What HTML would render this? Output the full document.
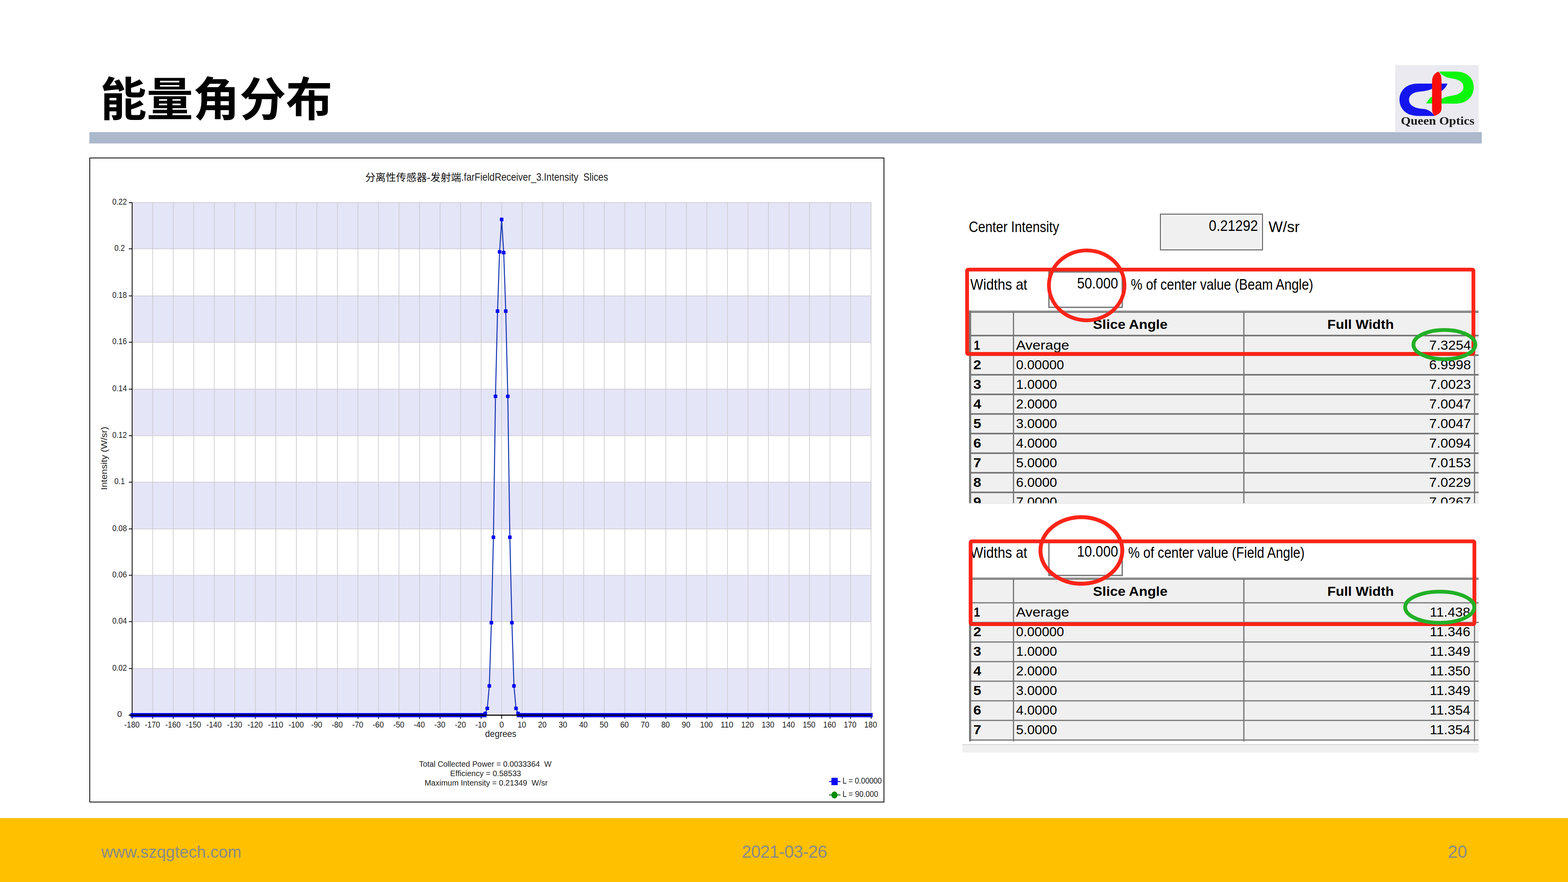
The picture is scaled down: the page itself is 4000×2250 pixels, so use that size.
<!DOCTYPE html>
<html lang="zh">
<head>
<meta charset="utf-8">
<title>能量角分布</title>
<style>
html,body{margin:0;padding:0;background:#fff}
body{width:4000px;height:2250px;overflow:hidden;font-family:"Liberation Sans", sans-serif}
#slide{position:relative;width:4000px;height:2250px;background:#fff;overflow:hidden}
.abs{position:absolute;display:block}
#rule{left:228px;top:337.4px;width:3552px;height:28.4px;background:#acb8cc}
#chartbox{left:228px;top:402px;width:2024px;height:1641px;border:2px solid #000;background:#fff}
#footer{left:0;top:2087px;width:4000px;height:163px;background:#ffc000}
.ft{position:absolute;line-height:48px;color:#898989;white-space:nowrap}
text{white-space:pre}
</style>
</head>
<body>
<div id="slide">
<h1 style="margin:0"><svg class="abs" style="left:0;top:150px" width="1200" height="200" viewBox="0 150 1200 200"><text x="255.6" y="296.2" font-size="118.5" font-weight="bold" fill="#000" textLength="592.5" lengthAdjust="spacingAndGlyphs" font-family='"Liberation Sans", "Noto Sans CJK SC", sans-serif'>能量角分布</text></svg></h1>
<div id="rule" class="abs"></div>
<div class="abs" style="left:3559px;top:166px;width:213px;height:170px;background:#eaeaf0">
<svg width="213" height="170" viewBox="0 0 213 170" style="filter:blur(0.6px)">
<g transform="translate(-19 -16) scale(0.13805)"><path d="M1105 458L560 458C340 458 218 590 218 755C218 920 340 1055 560 1055L865 1055C830 1000 770 935 650 925C500 915 395 860 395 760C395 665 470 620 600 605C720 592 780 575 830 548L1000 592C1045 560 1085 515 1105 458Z" fill="#1414ee"/><path d="M710 826L1250 830C1460 830 1590 700 1590 525C1590 350 1460 235 1250 235L950 235C1000 300 1060 345 1200 365C1330 385 1400 440 1400 520C1400 600 1330 660 1200 680C1080 698 1030 720 990 745L820 702C770 720 745 770 710 826Z" fill="#0cf60c"/><path d="M935 238C860 270 820 330 820 420L820 930C820 990 840 1035 872 1052C940 1030 995 990 995 920L995 420C995 330 985 280 935 238Z" fill="#fa0c0c"/></g>
<text x="14.46" y="151.6" font-size="29" textLength="187.88" lengthAdjust="spacingAndGlyphs" font-weight="bold" fill="#1c1c1c" font-family='"Liberation Serif", serif'>Queen Optics</text>
</svg></div>
<div id="chartbox" class="abs"></div>
<svg class="abs" width="4000" height="2250" viewBox="0 0 4000 2250" style="left:0;top:0">
<g font-family='"Liberation Sans", sans-serif' fill='#1e1e22'>
<rect x="337.2" y="516.8" width="1886" height="1306.8" fill="#fff"/>
<rect x="337.2" y="1705.4" width="1886" height="118.3" fill="#e5e5f8"/>
<rect x="337.2" y="1467.5" width="1886" height="118.3" fill="#e5e5f8"/>
<rect x="337.2" y="1230.1" width="1886" height="119.2" fill="#e5e5f8"/>
<rect x="337.2" y="992.7" width="1886" height="118.7" fill="#e5e5f8"/>
<rect x="337.2" y="754.8" width="1886" height="118.3" fill="#e5e5f8"/>
<rect x="337.2" y="516.9" width="1886" height="117.8" fill="#e5e5f8"/>
<path d="M389.56 516.8V1823.6M441.92 516.8V1823.6M494.28 516.8V1823.6M546.64 516.8V1823.6M599.01 516.8V1823.6M651.37 516.8V1823.6M703.73 516.8V1823.6M756.09 516.8V1823.6M808.45 516.8V1823.6M860.81 516.8V1823.6M913.17 516.8V1823.6M965.53 516.8V1823.6M1017.89 516.8V1823.6M1070.26 516.8V1823.6M1122.62 516.8V1823.6M1174.98 516.8V1823.6M1227.34 516.8V1823.6M1279.7 516.8V1823.6M1332.06 516.8V1823.6M1384.42 516.8V1823.6M1436.78 516.8V1823.6M1489.14 516.8V1823.6M1541.51 516.8V1823.6M1593.87 516.8V1823.6M1646.23 516.8V1823.6M1698.59 516.8V1823.6M1750.95 516.8V1823.6M1803.31 516.8V1823.6M1855.67 516.8V1823.6M1908.03 516.8V1823.6M1960.39 516.8V1823.6M2012.76 516.8V1823.6M2065.12 516.8V1823.6M2117.48 516.8V1823.6M2169.84 516.8V1823.6M2222.2 516.8V1823.6M337.2 1705.4H2223.2M337.2 1585.8H2223.2M337.2 1467.5H2223.2M337.2 1349.3H2223.2M337.2 1230.1H2223.2M337.2 1111.4H2223.2M337.2 992.7H2223.2M337.2 873.1H2223.2M337.2 754.8H2223.2M337.2 634.7H2223.2M337.2 516.9H2223.2" stroke="#cbcbcf" stroke-width="1.7" fill="none"/>
<path d="M328.7 1823.7H337.2M328.7 1705.4H337.2M328.7 1585.8H337.2M328.7 1467.5H337.2M328.7 1349.3H337.2M328.7 1230.1H337.2M328.7 1111.4H337.2M328.7 992.7H337.2M328.7 873.1H337.2M328.7 754.8H337.2M328.7 634.7H337.2M328.7 516.9H337.2M337.2 1823.6V1833.6M389.56 1823.6V1833.6M441.92 1823.6V1833.6M494.28 1823.6V1833.6M546.64 1823.6V1833.6M599.01 1823.6V1833.6M651.37 1823.6V1833.6M703.73 1823.6V1833.6M756.09 1823.6V1833.6M808.45 1823.6V1833.6M860.81 1823.6V1833.6M913.17 1823.6V1833.6M965.53 1823.6V1833.6M1017.89 1823.6V1833.6M1070.26 1823.6V1833.6M1122.62 1823.6V1833.6M1174.98 1823.6V1833.6M1227.34 1823.6V1833.6M1279.7 1823.6V1833.6M1332.06 1823.6V1833.6M1384.42 1823.6V1833.6M1436.78 1823.6V1833.6M1489.14 1823.6V1833.6M1541.51 1823.6V1833.6M1593.87 1823.6V1833.6M1646.23 1823.6V1833.6M1698.59 1823.6V1833.6M1750.95 1823.6V1833.6M1803.31 1823.6V1833.6M1855.67 1823.6V1833.6M1908.03 1823.6V1833.6M1960.39 1823.6V1833.6M2012.76 1823.6V1833.6M2065.12 1823.6V1833.6M2117.48 1823.6V1833.6M2169.84 1823.6V1833.6M2222.2 1823.6V1833.6M337.1 515.8V1824.6" stroke="#000" stroke-width="2" fill="none"/>
<rect x="332.7" y="1819" width="908.51" height="10.8" fill="#0202f0"/>
<rect x="1318.19" y="1819" width="908.01" height="10.8" fill="#0202f0"/>
<polyline fill="none" stroke="#1838b4" stroke-width="2.6" stroke-linejoin="round" points="1227.34,1824.2 1232.57,1823.8 1237.81,1820.2 1243.05,1807 1248.28,1749.8 1253.52,1588.5 1258.76,1370.5 1263.99,1011 1269.23,793.7 1274.46,642.5 1279.7,559.9 1284.94,644.4 1290.17,793.7 1295.41,1011 1300.64,1370.5 1305.88,1588.5 1311.12,1749.8 1316.35,1807 1321.59,1820.2 1326.82,1823.8 1332.06,1824.2"/>
<rect x="1233.21" y="1815.6" width="9.2" height="9.2" rx="1.6" fill="#0606f4"/>
<rect x="1238.45" y="1802.4" width="9.2" height="9.2" rx="1.6" fill="#0606f4"/>
<rect x="1243.68" y="1745.2" width="9.2" height="9.2" rx="1.6" fill="#0606f4"/>
<rect x="1248.92" y="1583.9" width="9.2" height="9.2" rx="1.6" fill="#0606f4"/>
<rect x="1254.16" y="1365.9" width="9.2" height="9.2" rx="1.6" fill="#0606f4"/>
<rect x="1259.39" y="1006.4" width="9.2" height="9.2" rx="1.6" fill="#0606f4"/>
<rect x="1264.63" y="789.1" width="9.2" height="9.2" rx="1.6" fill="#0606f4"/>
<rect x="1269.86" y="637.9" width="9.2" height="9.2" rx="1.6" fill="#0606f4"/>
<rect x="1275.1" y="555.3" width="9.2" height="9.2" rx="1.6" fill="#0606f4"/>
<rect x="1280.34" y="639.8" width="9.2" height="9.2" rx="1.6" fill="#0606f4"/>
<rect x="1285.57" y="789.1" width="9.2" height="9.2" rx="1.6" fill="#0606f4"/>
<rect x="1290.81" y="1006.4" width="9.2" height="9.2" rx="1.6" fill="#0606f4"/>
<rect x="1296.04" y="1365.9" width="9.2" height="9.2" rx="1.6" fill="#0606f4"/>
<rect x="1301.28" y="1583.9" width="9.2" height="9.2" rx="1.6" fill="#0606f4"/>
<rect x="1306.52" y="1745.2" width="9.2" height="9.2" rx="1.6" fill="#0606f4"/>
<rect x="1311.75" y="1802.4" width="9.2" height="9.2" rx="1.6" fill="#0606f4"/>
<rect x="1316.99" y="1815.6" width="9.2" height="9.2" rx="1.6" fill="#0606f4"/>
<path d="M328.7 1824.4H2223.2" stroke="#000" stroke-width="2.9"/>
<text x="305" y="1828.9" font-size="21.6" textLength="12.19" lengthAdjust="spacingAndGlyphs" text-anchor="middle">0</text>
<text x="305" y="1710.6" font-size="21.6" textLength="37.19" lengthAdjust="spacingAndGlyphs" text-anchor="middle">0.02</text>
<text x="305" y="1591" font-size="21.6" textLength="37.19" lengthAdjust="spacingAndGlyphs" text-anchor="middle">0.04</text>
<text x="305" y="1472.7" font-size="21.6" textLength="37.19" lengthAdjust="spacingAndGlyphs" text-anchor="middle">0.06</text>
<text x="305" y="1354.5" font-size="21.6" textLength="37.19" lengthAdjust="spacingAndGlyphs" text-anchor="middle">0.08</text>
<text x="305" y="1235.3" font-size="21.6" textLength="26.59" lengthAdjust="spacingAndGlyphs" text-anchor="middle">0.1</text>
<text x="305" y="1116.6" font-size="21.6" textLength="37.19" lengthAdjust="spacingAndGlyphs" text-anchor="middle">0.12</text>
<text x="305" y="997.9" font-size="21.6" textLength="37.19" lengthAdjust="spacingAndGlyphs" text-anchor="middle">0.14</text>
<text x="305" y="878.3" font-size="21.6" textLength="37.19" lengthAdjust="spacingAndGlyphs" text-anchor="middle">0.16</text>
<text x="305" y="760" font-size="21.6" textLength="37.19" lengthAdjust="spacingAndGlyphs" text-anchor="middle">0.18</text>
<text x="305" y="639.9" font-size="21.6" textLength="26.59" lengthAdjust="spacingAndGlyphs" text-anchor="middle">0.2</text>
<text x="305" y="522.1" font-size="21.6" textLength="37.19" lengthAdjust="spacingAndGlyphs" text-anchor="middle">0.22</text>
<text x="336.6" y="1856.2" font-size="21.4" textLength="38.97" lengthAdjust="spacingAndGlyphs" text-anchor="middle">-180</text>
<text x="388.96" y="1856.2" font-size="21.4" textLength="38.97" lengthAdjust="spacingAndGlyphs" text-anchor="middle">-170</text>
<text x="441.32" y="1856.2" font-size="21.4" textLength="38.97" lengthAdjust="spacingAndGlyphs" text-anchor="middle">-160</text>
<text x="493.68" y="1856.2" font-size="21.4" textLength="38.97" lengthAdjust="spacingAndGlyphs" text-anchor="middle">-150</text>
<text x="546.04" y="1856.2" font-size="21.4" textLength="38.97" lengthAdjust="spacingAndGlyphs" text-anchor="middle">-140</text>
<text x="598.41" y="1856.2" font-size="21.4" textLength="38.97" lengthAdjust="spacingAndGlyphs" text-anchor="middle">-130</text>
<text x="650.77" y="1856.2" font-size="21.4" textLength="38.97" lengthAdjust="spacingAndGlyphs" text-anchor="middle">-120</text>
<text x="703.13" y="1856.2" font-size="21.4" textLength="38.97" lengthAdjust="spacingAndGlyphs" text-anchor="middle">-110</text>
<text x="755.49" y="1856.2" font-size="21.4" textLength="38.97" lengthAdjust="spacingAndGlyphs" text-anchor="middle">-100</text>
<text x="807.85" y="1856.2" font-size="21.4" textLength="28.37" lengthAdjust="spacingAndGlyphs" text-anchor="middle">-90</text>
<text x="860.21" y="1856.2" font-size="21.4" textLength="28.37" lengthAdjust="spacingAndGlyphs" text-anchor="middle">-80</text>
<text x="912.57" y="1856.2" font-size="21.4" textLength="28.37" lengthAdjust="spacingAndGlyphs" text-anchor="middle">-70</text>
<text x="964.93" y="1856.2" font-size="21.4" textLength="28.37" lengthAdjust="spacingAndGlyphs" text-anchor="middle">-60</text>
<text x="1017.29" y="1856.2" font-size="21.4" textLength="28.37" lengthAdjust="spacingAndGlyphs" text-anchor="middle">-50</text>
<text x="1069.66" y="1856.2" font-size="21.4" textLength="28.37" lengthAdjust="spacingAndGlyphs" text-anchor="middle">-40</text>
<text x="1122.02" y="1856.2" font-size="21.4" textLength="28.37" lengthAdjust="spacingAndGlyphs" text-anchor="middle">-30</text>
<text x="1174.38" y="1856.2" font-size="21.4" textLength="28.37" lengthAdjust="spacingAndGlyphs" text-anchor="middle">-20</text>
<text x="1226.74" y="1856.2" font-size="21.4" textLength="28.37" lengthAdjust="spacingAndGlyphs" text-anchor="middle">-10</text>
<text x="1279.7" y="1856.2" font-size="21.4" textLength="11.47" lengthAdjust="spacingAndGlyphs" text-anchor="middle">0</text>
<text x="1331.26" y="1856.2" font-size="21.4" textLength="21.77" lengthAdjust="spacingAndGlyphs" text-anchor="middle">10</text>
<text x="1383.62" y="1856.2" font-size="21.4" textLength="21.77" lengthAdjust="spacingAndGlyphs" text-anchor="middle">20</text>
<text x="1435.98" y="1856.2" font-size="21.4" textLength="21.77" lengthAdjust="spacingAndGlyphs" text-anchor="middle">30</text>
<text x="1488.34" y="1856.2" font-size="21.4" textLength="21.77" lengthAdjust="spacingAndGlyphs" text-anchor="middle">40</text>
<text x="1540.71" y="1856.2" font-size="21.4" textLength="21.77" lengthAdjust="spacingAndGlyphs" text-anchor="middle">50</text>
<text x="1593.07" y="1856.2" font-size="21.4" textLength="21.77" lengthAdjust="spacingAndGlyphs" text-anchor="middle">60</text>
<text x="1645.43" y="1856.2" font-size="21.4" textLength="21.77" lengthAdjust="spacingAndGlyphs" text-anchor="middle">70</text>
<text x="1697.79" y="1856.2" font-size="21.4" textLength="21.77" lengthAdjust="spacingAndGlyphs" text-anchor="middle">80</text>
<text x="1750.15" y="1856.2" font-size="21.4" textLength="21.77" lengthAdjust="spacingAndGlyphs" text-anchor="middle">90</text>
<text x="1802.11" y="1856.2" font-size="21.4" textLength="32.37" lengthAdjust="spacingAndGlyphs" text-anchor="middle">100</text>
<text x="1854.47" y="1856.2" font-size="21.4" textLength="32.37" lengthAdjust="spacingAndGlyphs" text-anchor="middle">110</text>
<text x="1906.83" y="1856.2" font-size="21.4" textLength="32.37" lengthAdjust="spacingAndGlyphs" text-anchor="middle">120</text>
<text x="1959.19" y="1856.2" font-size="21.4" textLength="32.37" lengthAdjust="spacingAndGlyphs" text-anchor="middle">130</text>
<text x="2011.56" y="1856.2" font-size="21.4" textLength="32.37" lengthAdjust="spacingAndGlyphs" text-anchor="middle">140</text>
<text x="2063.92" y="1856.2" font-size="21.4" textLength="32.37" lengthAdjust="spacingAndGlyphs" text-anchor="middle">150</text>
<text x="2116.28" y="1856.2" font-size="21.4" textLength="32.37" lengthAdjust="spacingAndGlyphs" text-anchor="middle">160</text>
<text x="2168.64" y="1856.2" font-size="21.4" textLength="32.37" lengthAdjust="spacingAndGlyphs" text-anchor="middle">170</text>
<text x="2221" y="1856.2" font-size="21.4" textLength="32.37" lengthAdjust="spacingAndGlyphs" text-anchor="middle">180</text>
<text x="1277.5" y="1879.9" font-size="24" textLength="79.88" lengthAdjust="spacingAndGlyphs" text-anchor="middle">degrees</text>
<g transform="translate(272.6 1248.7) rotate(-90)"><text x="-1.32" y="0" font-size="22" textLength="161.64" lengthAdjust="spacingAndGlyphs">Intensity (W/sr)</text></g>
<text x="931.4" y="461.6" font-size="26" fill="#111" textLength="245.2" lengthAdjust="spacingAndGlyphs" font-family='"Liberation Sans", "Noto Sans CJK SC", sans-serif'>分离性传感器-发射端</text>
<text x="1176.82" y="461" font-size="28" textLength="374.36" lengthAdjust="spacingAndGlyphs" xml:space="preserve">.farFieldReceiver_3.Intensity  Slices</text>
<text x="1238" y="1955.6" font-size="20" textLength="337.9" lengthAdjust="spacingAndGlyphs" text-anchor="middle">Total Collected Power = 0.0033364  W</text>
<text x="1238.8" y="1979.6" font-size="20" textLength="180.9" lengthAdjust="spacingAndGlyphs" text-anchor="middle">Efficiency = 0.58533</text>
<text x="1240.2" y="2004.2" font-size="20" textLength="314" lengthAdjust="spacingAndGlyphs" text-anchor="middle">Maximum Intensity = 0.21349  W/sr</text>
<path d="M2115 1993.7H2144" stroke="#0a0acd" stroke-width="2.4"/>
<rect x="2121" y="1984.2" width="16" height="18.8" fill="#0808f6"/>
<path d="M2115 2027.9H2144" stroke="#0b6b0b" stroke-width="2.4"/>
<ellipse cx="2128.7" cy="2028" rx="7.9" ry="9" fill="#0a8c0a"/>
<text x="2149.24" y="1998.7" font-size="22.6" textLength="100.21" lengthAdjust="spacingAndGlyphs">L = 0.00000</text>
<text x="2149.24" y="2032.7" font-size="22.6" textLength="90.91" lengthAdjust="spacingAndGlyphs">L = 90.000</text>
</g></svg>
<svg class="abs" width="4000" height="2250" viewBox="0 0 4000 2250" style="left:0;top:0">
<g font-family='"Liberation Sans", sans-serif' fill='#000'>
<text x="2471.46" y="591.9" font-size="39" textLength="230.48" lengthAdjust="spacingAndGlyphs">Center Intensity</text>
<rect x="2958.9" y="544.9" width="263.1" height="93.9" fill="#747474"/><rect x="2961.8" y="547.8" width="257.3" height="88.1" fill="#fff"/><rect x="2964.8" y="550.8" width="251.3" height="82.1" fill="#f0f0f0"/>
<text x="3209.14" y="589" font-size="39" textLength="125.28" lengthAdjust="spacingAndGlyphs" text-anchor="end">0.21292</text>
<text x="3236.06" y="591.8" font-size="39" textLength="79.28" lengthAdjust="spacingAndGlyphs">W/sr</text>
<rect x="2675.8" y="693.8" width="187" height="90.2" fill="#fff" stroke="#787878" stroke-width="3.4"/>
<text x="2475.26" y="738.7" font-size="39" textLength="145.28" lengthAdjust="spacingAndGlyphs">Widths at</text>
<text x="2852.14" y="736.2" font-size="39" textLength="104.48" lengthAdjust="spacingAndGlyphs" text-anchor="end">50.000</text>
<text x="2884.86" y="738.7" font-size="39" textLength="465.28" lengthAdjust="spacingAndGlyphs">% of center value (Beam Angle)</text>
<g>
<clipPath id="c1"><rect x="2460" y="780" width="1320" height="505.2"/></clipPath><g clip-path="url(#c1)">
<rect x="2472" y="792.2" width="1300" height="493" fill="#f0f0f0"/>
<rect x="2472" y="792.2" width="1300" height="5.8" fill="#7c7c7c"/>
<rect x="2472" y="792.2" width="1300" height="2.6" fill="#9e9e9e"/>
<rect x="2472" y="792.2" width="5.4" height="493" fill="#777777"/>
<rect x="2583.9" y="795.2" width="3.1" height="490" fill="#777777"/>
<rect x="3171.5" y="795.2" width="3.2" height="490" fill="#777777"/>
<rect x="3760" y="795.2" width="3" height="490" fill="#777777"/>
<rect x="2472" y="854" width="1300" height="4.1" fill="#777777"/>
<rect x="2472" y="904" width="1300" height="4.1" fill="#777777"/>
<rect x="2472" y="954" width="1300" height="4.1" fill="#777777"/>
<rect x="2472" y="1004" width="1300" height="4.1" fill="#777777"/>
<rect x="2472" y="1054" width="1300" height="4.1" fill="#777777"/>
<rect x="2472" y="1104" width="1300" height="4.1" fill="#777777"/>
<rect x="2472" y="1154" width="1300" height="4.1" fill="#777777"/>
<rect x="2472" y="1204" width="1300" height="4.1" fill="#777777"/>
<rect x="2472" y="1254" width="1300" height="4.1" fill="#777777"/>
<text x="2788.36" y="838.6" font-size="34" textLength="190.08" lengthAdjust="spacingAndGlyphs" font-weight="bold">Slice Angle</text>
<text x="3385.96" y="838.8" font-size="34" textLength="169.68" lengthAdjust="spacingAndGlyphs" font-weight="bold">Full Width</text>
<text x="2484.36" y="891.8" font-size="34" textLength="15.88" lengthAdjust="spacingAndGlyphs" font-weight="bold">1</text>
<text x="2591.96" y="891.8" font-size="34" textLength="135.68" lengthAdjust="spacingAndGlyphs">Average</text>
<text x="3752.44" y="891.8" font-size="34" textLength="106.68" lengthAdjust="spacingAndGlyphs" text-anchor="end">7.3254</text>
<text x="2482.96" y="941.8" font-size="34" textLength="20.08" lengthAdjust="spacingAndGlyphs" font-weight="bold">2</text>
<text x="2591.96" y="941.8" font-size="34" textLength="122.48" lengthAdjust="spacingAndGlyphs">0.00000</text>
<text x="3752.44" y="941.8" font-size="34" textLength="106.68" lengthAdjust="spacingAndGlyphs" text-anchor="end">6.9998</text>
<text x="2482.96" y="991.8" font-size="34" textLength="20.08" lengthAdjust="spacingAndGlyphs" font-weight="bold">3</text>
<text x="2591.96" y="991.8" font-size="34" textLength="104.68" lengthAdjust="spacingAndGlyphs">1.0000</text>
<text x="3752.44" y="991.8" font-size="34" textLength="106.68" lengthAdjust="spacingAndGlyphs" text-anchor="end">7.0023</text>
<text x="2482.96" y="1041.8" font-size="34" textLength="20.08" lengthAdjust="spacingAndGlyphs" font-weight="bold">4</text>
<text x="2591.96" y="1041.8" font-size="34" textLength="104.68" lengthAdjust="spacingAndGlyphs">2.0000</text>
<text x="3752.44" y="1041.8" font-size="34" textLength="106.68" lengthAdjust="spacingAndGlyphs" text-anchor="end">7.0047</text>
<text x="2482.96" y="1091.8" font-size="34" textLength="20.08" lengthAdjust="spacingAndGlyphs" font-weight="bold">5</text>
<text x="2591.96" y="1091.8" font-size="34" textLength="104.68" lengthAdjust="spacingAndGlyphs">3.0000</text>
<text x="3752.44" y="1091.8" font-size="34" textLength="106.68" lengthAdjust="spacingAndGlyphs" text-anchor="end">7.0047</text>
<text x="2482.96" y="1141.8" font-size="34" textLength="20.08" lengthAdjust="spacingAndGlyphs" font-weight="bold">6</text>
<text x="2591.96" y="1141.8" font-size="34" textLength="104.68" lengthAdjust="spacingAndGlyphs">4.0000</text>
<text x="3752.44" y="1141.8" font-size="34" textLength="106.68" lengthAdjust="spacingAndGlyphs" text-anchor="end">7.0094</text>
<text x="2482.96" y="1191.8" font-size="34" textLength="20.08" lengthAdjust="spacingAndGlyphs" font-weight="bold">7</text>
<text x="2591.96" y="1191.8" font-size="34" textLength="104.68" lengthAdjust="spacingAndGlyphs">5.0000</text>
<text x="3752.44" y="1191.8" font-size="34" textLength="106.68" lengthAdjust="spacingAndGlyphs" text-anchor="end">7.0153</text>
<text x="2482.96" y="1241.8" font-size="34" textLength="20.08" lengthAdjust="spacingAndGlyphs" font-weight="bold">8</text>
<text x="2591.96" y="1241.8" font-size="34" textLength="104.68" lengthAdjust="spacingAndGlyphs">6.0000</text>
<text x="3752.44" y="1241.8" font-size="34" textLength="106.68" lengthAdjust="spacingAndGlyphs" text-anchor="end">7.0229</text>
<text x="2482.96" y="1291.8" font-size="34" textLength="20.08" lengthAdjust="spacingAndGlyphs" font-weight="bold">9</text>
<text x="2591.96" y="1291.8" font-size="34" textLength="104.68" lengthAdjust="spacingAndGlyphs">7.0000</text>
<text x="3752.44" y="1291.8" font-size="34" textLength="106.68" lengthAdjust="spacingAndGlyphs" text-anchor="end">7.0267</text>
<rect x="2472" y="1283.2" width="1300" height="2" fill="#e4e4e4" opacity="0.85"/>
</g></g>
<rect x="2675.8" y="1384" width="187" height="84" fill="#fff" stroke="#787878" stroke-width="3.4"/>
<text x="2475.26" y="1422.5" font-size="39" textLength="145.28" lengthAdjust="spacingAndGlyphs">Widths at</text>
<text x="2852.24" y="1419.7" font-size="39" textLength="104.68" lengthAdjust="spacingAndGlyphs" text-anchor="end">10.000</text>
<text x="2878.06" y="1422.5" font-size="39" textLength="450.08" lengthAdjust="spacingAndGlyphs">% of center value (Field Angle)</text>
<clipPath id="c2"><rect x="2460" y="1460" width="1320" height="431.6"/></clipPath><g clip-path="url(#c2)">
<rect x="2472" y="1473.2" width="1300" height="418.4" fill="#f0f0f0"/>
<rect x="2472" y="1473.2" width="1300" height="5.8" fill="#7c7c7c"/>
<rect x="2472" y="1473.2" width="1300" height="2.6" fill="#9e9e9e"/>
<rect x="2472" y="1473.2" width="5.4" height="418.4" fill="#777777"/>
<rect x="2583.9" y="1476.2" width="3.1" height="415.4" fill="#777777"/>
<rect x="3171.5" y="1476.2" width="3.2" height="415.4" fill="#777777"/>
<rect x="3760" y="1476.2" width="3" height="415.4" fill="#777777"/>
<rect x="2472" y="1536.3" width="1300" height="3" fill="#777777"/>
<rect x="2472" y="1586.3" width="1300" height="3" fill="#777777"/>
<rect x="2472" y="1636.3" width="1300" height="3" fill="#777777"/>
<rect x="2472" y="1686.3" width="1300" height="3" fill="#777777"/>
<rect x="2472" y="1736.3" width="1300" height="3" fill="#777777"/>
<rect x="2472" y="1786.3" width="1300" height="3" fill="#777777"/>
<rect x="2472" y="1836.3" width="1300" height="3" fill="#777777"/>
<rect x="2472" y="1886.3" width="1300" height="3" fill="#777777"/>
<text x="2788.36" y="1519.6" font-size="34" textLength="190.08" lengthAdjust="spacingAndGlyphs" font-weight="bold">Slice Angle</text>
<text x="3385.96" y="1519.8" font-size="34" textLength="169.68" lengthAdjust="spacingAndGlyphs" font-weight="bold">Full Width</text>
<text x="2484.36" y="1572.5" font-size="34" textLength="15.88" lengthAdjust="spacingAndGlyphs" font-weight="bold">1</text>
<text x="2591.96" y="1572.5" font-size="34" textLength="135.68" lengthAdjust="spacingAndGlyphs">Average</text>
<text x="3750.94" y="1572.5" font-size="34" textLength="103.68" lengthAdjust="spacingAndGlyphs" text-anchor="end">11.438</text>
<text x="2482.96" y="1622.5" font-size="34" textLength="20.08" lengthAdjust="spacingAndGlyphs" font-weight="bold">2</text>
<text x="2591.96" y="1622.5" font-size="34" textLength="122.48" lengthAdjust="spacingAndGlyphs">0.00000</text>
<text x="3750.94" y="1622.5" font-size="34" textLength="103.68" lengthAdjust="spacingAndGlyphs" text-anchor="end">11.346</text>
<text x="2482.96" y="1672.5" font-size="34" textLength="20.08" lengthAdjust="spacingAndGlyphs" font-weight="bold">3</text>
<text x="2591.96" y="1672.5" font-size="34" textLength="104.68" lengthAdjust="spacingAndGlyphs">1.0000</text>
<text x="3750.94" y="1672.5" font-size="34" textLength="103.68" lengthAdjust="spacingAndGlyphs" text-anchor="end">11.349</text>
<text x="2482.96" y="1722.5" font-size="34" textLength="20.08" lengthAdjust="spacingAndGlyphs" font-weight="bold">4</text>
<text x="2591.96" y="1722.5" font-size="34" textLength="104.68" lengthAdjust="spacingAndGlyphs">2.0000</text>
<text x="3750.94" y="1722.5" font-size="34" textLength="103.68" lengthAdjust="spacingAndGlyphs" text-anchor="end">11.350</text>
<text x="2482.96" y="1772.5" font-size="34" textLength="20.08" lengthAdjust="spacingAndGlyphs" font-weight="bold">5</text>
<text x="2591.96" y="1772.5" font-size="34" textLength="104.68" lengthAdjust="spacingAndGlyphs">3.0000</text>
<text x="3750.94" y="1772.5" font-size="34" textLength="103.68" lengthAdjust="spacingAndGlyphs" text-anchor="end">11.349</text>
<text x="2482.96" y="1822.5" font-size="34" textLength="20.08" lengthAdjust="spacingAndGlyphs" font-weight="bold">6</text>
<text x="2591.96" y="1822.5" font-size="34" textLength="104.68" lengthAdjust="spacingAndGlyphs">4.0000</text>
<text x="3750.94" y="1822.5" font-size="34" textLength="103.68" lengthAdjust="spacingAndGlyphs" text-anchor="end">11.354</text>
<text x="2482.96" y="1872.5" font-size="34" textLength="20.08" lengthAdjust="spacingAndGlyphs" font-weight="bold">7</text>
<text x="2591.96" y="1872.5" font-size="34" textLength="104.68" lengthAdjust="spacingAndGlyphs">5.0000</text>
<text x="3750.94" y="1872.5" font-size="34" textLength="103.68" lengthAdjust="spacingAndGlyphs" text-anchor="end">11.354</text>
</g>
<rect x="2455" y="1898" width="1317" height="22" fill="#f0f0f0"/><rect x="2455" y="1898" width="1317" height="2.8" fill="#dcdcdc"/>
<g fill="none" stroke="#fb2418" stroke-width="9.6">
<rect x="2467.1" y="687.8" width="1291.6" height="215.1" rx="3"/>
<ellipse cx="2772.2" cy="727.9" rx="96.4" ry="89.2"/>
<rect x="2476.1" y="1381" width="1285.1" height="211.2" rx="3"/>
<ellipse cx="2758.6" cy="1404.2" rx="104.4" ry="84.9" stroke-width="10"/>
</g>
<g fill="none" stroke="#22b026" stroke-width="9.6">
<ellipse cx="3684.6" cy="879" rx="78.9" ry="37.2"/>
<ellipse cx="3672.8" cy="1549" rx="88.2" ry="39.7"/>
</g>
</g></svg>
<div id="footer" class="abs"></div>
<span class="ft" style="left:258.4px;top:2149.6px;font-size:41.75px">www.szqgtech.com</span>
<span class="ft" style="left:1892.2px;top:2148.8px;font-size:44px;letter-spacing:-0.78px">2021-03-26</span>
<span class="ft" style="left:3693.8px;top:2148.8px;font-size:44px">20</span>
</div>
</body>
</html>
